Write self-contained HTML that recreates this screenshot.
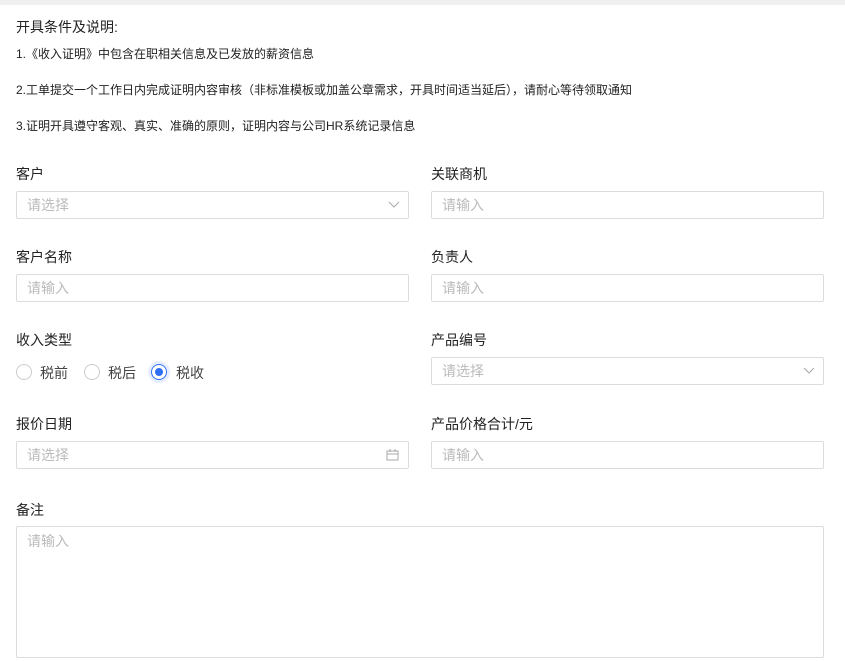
<!DOCTYPE html><html><head><meta charset="utf-8"><style>
body{margin:0;width:845px;height:661px;background:#fff;position:relative;overflow:hidden;font-family:"Liberation Sans","Noto Sans CJK SC",sans-serif;color:#222}
.a{position:absolute;white-space:nowrap}
.t{font-size:14px}.s{font-size:12px}.l{font-size:14px;color:#222}
.in{position:absolute;height:26px;border:1px solid #dcdcdc;border-radius:2px;font-size:14px;color:#bbb;line-height:26px;padding-left:10px;box-sizing:content-box}
.r{position:absolute;width:14px;height:14px;border:1px solid #ccc;border-radius:50%;top:364px}
</style></head><body>
<div class="a" style="left:0;top:0;width:845px;height:5px;background:#f0f0f0"></div>
<div class="a t" style="left:16px;top:17px">开具条件及说明:</div>
<div class="a s" style="left:16px;top:45px">1.《收入证明》中包含在职相关信息及已发放的薪资信息</div>
<div class="a s" style="left:16px;top:81px">2.工单提交一个工作日内完成证明内容审核（非标准模板或加盖公章需求，开具时间适当延后），请耐心等待领取通知</div>
<div class="a s" style="left:16px;top:117px">3.证明开具遵守客观、真实、准确的原则，证明内容与公司HR系统记录信息</div>
<div class="a l" style="left:16px;top:164px">客户</div>
<div class="a l" style="left:431px;top:164px">关联商机</div>
<div class="in" style="left:16px;top:191px;width:381px">请选择<svg style="position:absolute;right:8px;top:9px" width="12" height="8"><path d="M1 1l5 5 5-5" stroke="#aaa" fill="none"/></svg></div>
<div class="in" style="left:431px;top:191px;width:381px">请输入</div>
<div class="a l" style="left:16px;top:247px">客户名称</div>
<div class="a l" style="left:431px;top:247px">负责人</div>
<div class="in" style="left:16px;top:274px;width:381px">请输入</div>
<div class="in" style="left:431px;top:274px;width:381px">请输入</div>
<div class="a l" style="left:16px;top:330px">收入类型</div>
<div class="a l" style="left:431px;top:330px">产品编号</div>
<div class="r" style="left:16px"></div><div class="a l" style="left:40px;top:363px;color:#444">税前</div>
<div class="r" style="left:84px"></div><div class="a l" style="left:108px;top:363px;color:#444">税后</div>
<div class="r" style="left:151px;border-color:#2f6ff5;box-shadow:0 0 0 3px #e6eeff"></div><div class="a" style="left:155px;top:368px;width:8px;height:8px;border-radius:50%;background:#2f6ff5"></div><div class="a l" style="left:176px;top:363px;color:#444">税收</div>
<div class="in" style="left:431px;top:357px;width:381px">请选择<svg style="position:absolute;right:8px;top:9px" width="12" height="8"><path d="M1 1l5 5 5-5" stroke="#aaa" fill="none"/></svg></div>
<div class="a l" style="left:16px;top:414px">报价日期</div>
<div class="a l" style="left:431px;top:414px">产品价格合计/元</div>
<div class="in" style="left:16px;top:441px;width:381px">请选择<svg style="position:absolute;right:9px;top:7px" width="13" height="12"><rect x="1" y="2" width="11" height="9" stroke="#aaa" fill="none"/><path d="M1 5h11M4 0v3M9 0v3" stroke="#aaa"/></svg></div>
<div class="in" style="left:431px;top:441px;width:381px">请输入</div>
<div class="a l" style="left:16px;top:500px">备注</div>
<div class="in" style="left:16px;top:526px;width:796px;height:130px;line-height:28px">请输入</div>
</body></html>
